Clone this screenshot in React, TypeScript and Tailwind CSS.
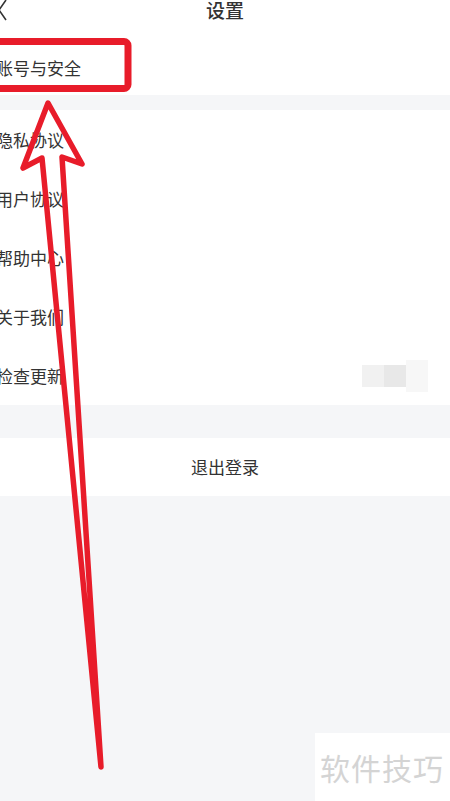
const rows = ['隐私协议', '用户协议', '帮助中心', '关于我们', '检查更新'];

export default function App() {
  return (
    <div
      className="relative w-[450px] h-[801px] overflow-hidden bg-[#f5f6f8] text-[#333]"
      style={{ fontFamily: '"Noto Sans CJK SC", "Noto Sans", sans-serif' }}
    >
      {/* header */}
      <header className="relative h-[28px] bg-white flex items-center justify-center">
        <svg viewBox="0 0 12 22" className="absolute left-[-3px] top-[-1px] w-[12px] h-[22px]" fill="none" stroke="#333" strokeWidth="1.6">
          <path d="M9 1 2 11l7 10" />
        </svg>
        <h1 className="text-[19px] font-medium leading-none -mt-[9px]">设置</h1>
      </header>

      {/* account */}
      <div className="h-[67px] bg-white flex items-center pt-[12px]">
        <span className="text-[17px] -ml-[4px]">账号与安全</span>
      </div>

      {/* list */}
      <div className="mt-[15px] bg-white">
        {rows.map((r, i) => (
          <div key={r} className="relative h-[59px] flex items-center">
            <span className="text-[17px] -ml-[4px]">{r}</span>
            {i === 4 && (
              <div className="absolute right-[22px] top-[14px] flex">
                <div className="w-[22px] h-[22px] mt-[5px] bg-[#f1f1f1]" />
                <div className="w-[22px] h-[22px] mt-[5px] bg-[#e8e8e8]" />
                <div className="w-[22px] h-[32px] bg-[#f7f7f7]" />
              </div>
            )}
          </div>
        ))}
      </div>

      {/* logout */}
      <div className="mt-[33px] h-[58px] bg-white flex items-center justify-center">
        <span className="text-[17px]">退出登录</span>
      </div>

      {/* watermark */}
      <div className="absolute left-[315px] top-[733px] w-[135px] h-[68px] bg-white flex items-center pl-[5px]">
        <span className="text-[30px] text-[#d4d4d4] tracking-[1px]">软件技巧</span>
      </div>

      {/* annotation */}
      <svg className="absolute inset-0 pointer-events-none" width="450" height="801" viewBox="0 0 450 801" fill="none">
        <rect x="-10" y="41.5" width="138" height="47" rx="4" stroke="#e81c2a" strokeWidth="7" />
        <polygon
          points="48,103 82,164 62,157 101,767 42,158 23,168"
          stroke="#e81c2a"
          strokeWidth="5.5"
          strokeLinejoin="round"
        />
      </svg>
    </div>
  );
}
